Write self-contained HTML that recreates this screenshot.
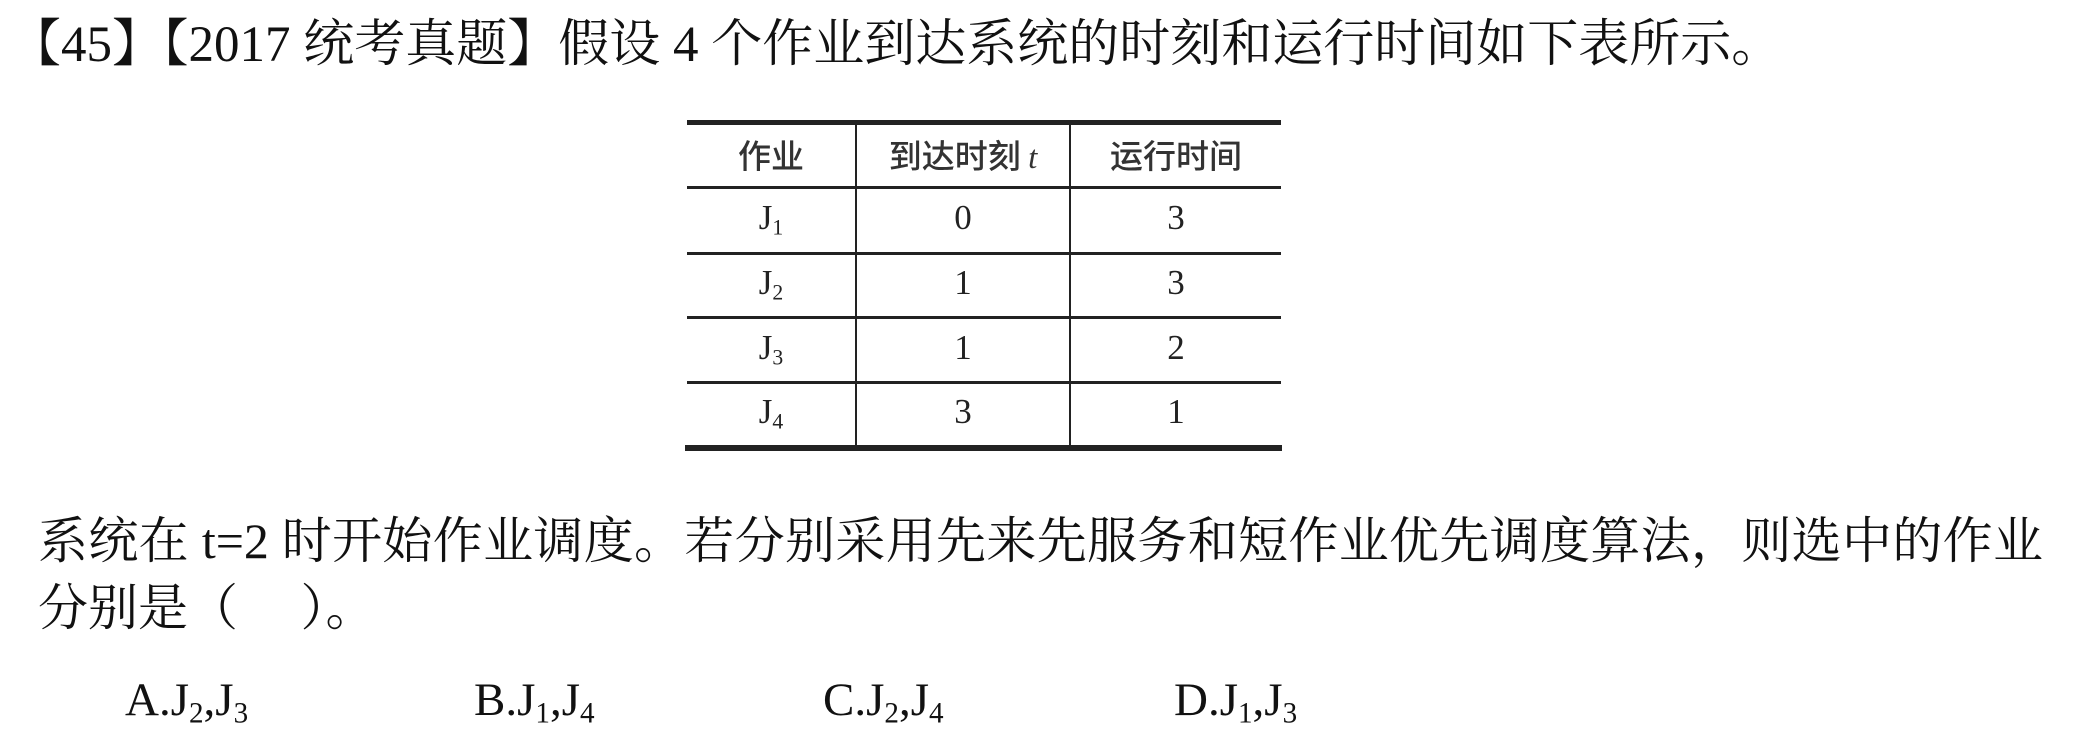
<!DOCTYPE html>
<html><head><meta charset="utf-8"><style>
html,body{margin:0;padding:0;background:#fff;width:2081px;height:744px;overflow:hidden;position:relative;}
.s{font-family:"Liberation Serif","Noto Serif CJK SC",serif;color:#111;position:absolute;white-space:nowrap;}
.hl{position:absolute;background:#222;}
.c{position:absolute;text-align:center;font-family:"Liberation Serif","Noto Serif CJK SC",serif;font-size:35px;color:#222;}
.h{font-family:"Noto Sans CJK SC",sans-serif;font-size:33px;font-weight:500;color:#333;}
sub{font-size:0.62em;vertical-align:-0.25em;}
</style></head><body>
<div class="s" style="left:10px;top:15px;font-size:51px;line-height:60px;">【45】【2017 统考真题】假设 4 个作业到达系统的时刻和运行时间如下表所示。</div>

<div class="hl" style="left:687px;top:120px;width:594px;height:5px;"></div>
<div class="hl" style="left:687px;top:186px;width:594px;height:3px;"></div>
<div class="hl" style="left:687px;top:252px;width:594px;height:3px;"></div>
<div class="hl" style="left:687px;top:316px;width:594px;height:3px;"></div>
<div class="hl" style="left:687px;top:381px;width:594px;height:3px;"></div>
<div class="hl" style="left:685px;top:445px;width:597px;height:6px;"></div>
<div class="hl" style="left:855px;top:122px;width:2px;height:327px;"></div>
<div class="hl" style="left:1069px;top:122px;width:2px;height:327px;"></div>

<div class="c h" style="left:687px;top:130px;width:168px;">作业</div>
<div class="c h" style="left:857px;top:130px;width:212px;">到达时刻 <i style="font-family:'Liberation Serif',serif">t</i></div>
<div class="c h" style="left:1071px;top:130px;width:210px;">运行时间</div>

<div class="c" style="left:687px;top:198px;width:168px;">J<sub>1</sub></div>
<div class="c" style="left:857px;top:198px;width:212px;">0</div>
<div class="c" style="left:1071px;top:198px;width:210px;">3</div>
<div class="c" style="left:687px;top:263px;width:168px;">J<sub>2</sub></div>
<div class="c" style="left:857px;top:263px;width:212px;">1</div>
<div class="c" style="left:1071px;top:263px;width:210px;">3</div>
<div class="c" style="left:687px;top:328px;width:168px;">J<sub>3</sub></div>
<div class="c" style="left:857px;top:328px;width:212px;">1</div>
<div class="c" style="left:1071px;top:328px;width:210px;">2</div>
<div class="c" style="left:687px;top:392px;width:168px;">J<sub>4</sub></div>
<div class="c" style="left:857px;top:392px;width:212px;">3</div>
<div class="c" style="left:1071px;top:392px;width:210px;">1</div>

<div class="s" style="left:38px;top:510px;font-size:50px;line-height:62px;width:2005px;text-align:justify;text-align-last:justify;white-space:normal;">系统在 t=2 时开始作业调度。若分别采用先来先服务和短作业优先调度算法，则选中的作业</div>
<div class="s" style="left:38px;top:577px;font-size:50px;line-height:62px;">分别是（&nbsp;&nbsp;&nbsp;&nbsp;&nbsp;）。</div>

<div class="s" style="left:125px;top:674px;font-size:47px;line-height:52px;">A.J<sub>2</sub>,J<sub>3</sub></div>
<div class="s" style="left:474px;top:674px;font-size:47px;line-height:52px;">B.J<sub>1</sub>,J<sub>4</sub></div>
<div class="s" style="left:823px;top:674px;font-size:47px;line-height:52px;">C.J<sub>2</sub>,J<sub>4</sub></div>
<div class="s" style="left:1174px;top:674px;font-size:47px;line-height:52px;">D.J<sub>1</sub>,J<sub>3</sub></div>
</body></html>
